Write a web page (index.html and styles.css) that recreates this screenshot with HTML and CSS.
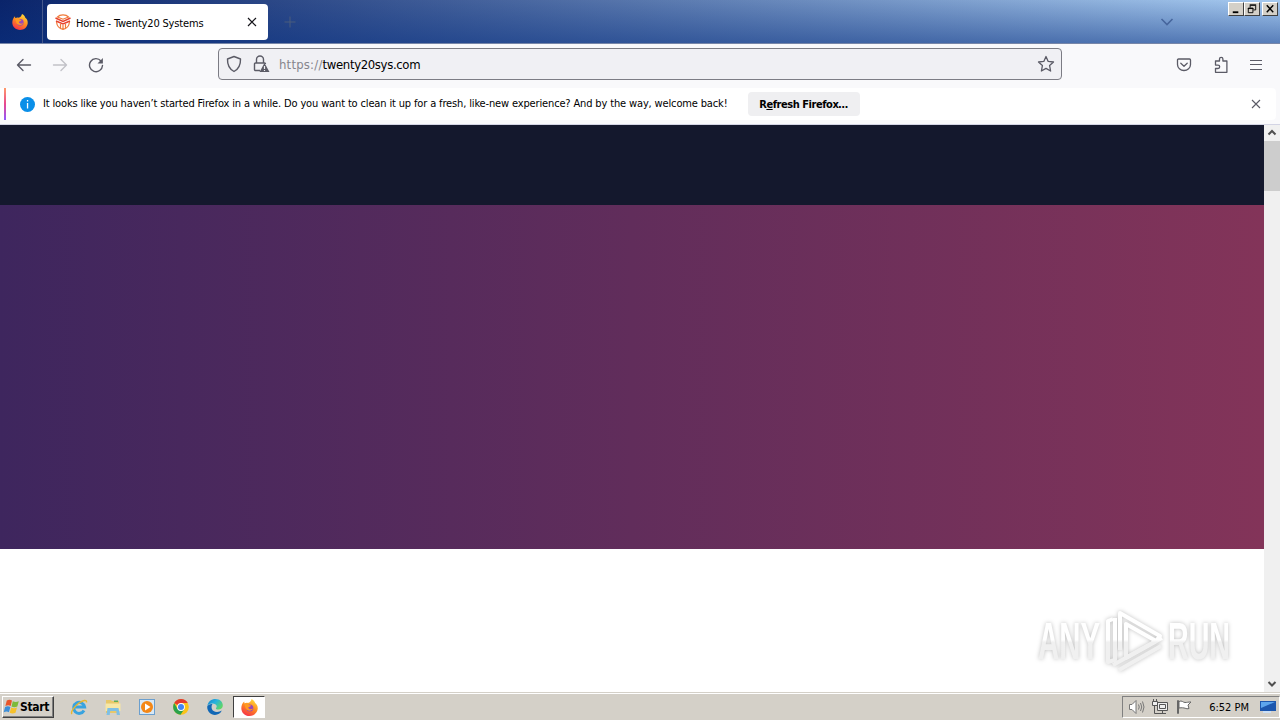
FILE: index.html
```html
<!DOCTYPE html>
<html>
<head>
	<meta charset="utf-8">
	<title>Home - Twenty20 Systems</title>
	<link rel="stylesheet" href="styles.css">
</head>
<body>
	<svg class="defs" width="0" height="0">
		<defs>
			<linearGradient id="flame" x1="0.8" y1="0" x2="0.3" y2="1">
				<stop offset="0" stop-color="#ffe23c"/>
				<stop offset="0.5" stop-color="#ff8a20"/>
				<stop offset="1" stop-color="#f5304a"/>
			</linearGradient>
			<linearGradient id="edge" x1="0" y1="0" x2="1" y2="0.6">
				<stop offset="0" stop-color="#1680c8"/>
				<stop offset="0.5" stop-color="#27b1e0"/>
				<stop offset="1" stop-color="#5fd668"/>
			</linearGradient>
			<linearGradient id="mark" gradientUnits="userSpaceOnUse" x1="0" y1="0" x2="0" y2="66">
				<stop offset="0.48" stop-color="#ffffff"/>
				<stop offset="0.52" stop-color="#f0f0f0"/>
			</linearGradient>
			<symbol id="firefox" viewBox="0 0 16 16">
				<path fill="url(#flame)" d="M10 0c2 1 3 2.500 3.300 3.800C15 5 16 7 15.700 9.500 15.200 13.200 12 16 8 16 3.600 16 .3 12.700.3 8.600.3 6 1.400 3.700 3 2.300l.3 1.900C4.300 3.600 5.500 3.400 6.500 3.700 8.500 3.200 9.500 2 10 0z"/>
				<circle cx="8.300" cy="8.400" r="3.300" fill="#9a48b8"/>
				<path fill="#ff9a22" d="M3 4.500c2-.8 3.600-.2 4.700 1.100L9.500 6c-.5 1.200-2 1.200-2.700 2 .5 2 3 2 4.500 1-.8 2.500-5.600 3-7-.5z"/>
			</symbol>
		</defs>
	</svg>

	<div class="tabs">
		<div class="pinned"><svg width="16" height="16"><use href="#firefox"/></svg></div>
		<div class="tab">
			<svg width="16" height="16" viewBox="0 0 16 16" fill="none" stroke="#e8432e" stroke-width="1.500">
				<path d="M.5 4L8 7.500 15.500 4M1 7l7 3 7-3"/>
				<path stroke="#f07a3a" stroke-width="1.200" d="M2.500 3C5 .2 11 .2 13.500 3L8 5.200zM1.500 8c.5 4 3 6.800 6.500 7.300 3.500-.5 6-3.300 6.500-7.300M5.500 10v4M8 11v4M10.500 10v4"/>
			</svg>
			<span class="title">Home - Twenty20 Systems</span>
			<svg width="10" height="10" viewBox="0 0 10 10" stroke="#15141a" stroke-width="1.200"><path d="M1 1l8 8M9 1L1 9"/></svg>
		</div>
		<svg class="plus" width="12" height="12" viewBox="0 0 12 12" stroke="#4a5c7c"><path d="M6 .5v11M.5 6h11"/></svg>
		<svg class="list" width="14" height="8" viewBox="0 0 14 8" fill="none" stroke="#47669d" stroke-width="1.600"><path d="M1.500 1L7 6.500 12.500 1"/></svg>
		<div class="controls">
			<svg width="15" height="13" viewBox="0 0 15 13"><path fill="#000" d="M4 9h6v2H4z"/></svg>
			<svg width="15" height="13" viewBox="0 0 15 13" fill="none" stroke="#000"><path d="M5.500 5V2.500h6v5H9M5 2h7M3.500 5.500h5v5h-5zM3 6h6"/></svg>
			<svg class="close" width="15" height="13" viewBox="0 0 15 13" stroke="#000" stroke-width="1.600"><path d="M4 2.500l7 7.500M11 2.500L4 10"/></svg>
		</div>
	</div>

	<div class="toolbar">
		<div class="nav">
			<svg width="16" height="16" viewBox="0 0 16 16" fill="none" stroke="#5b5b66" stroke-width="1.400" stroke-linecap="round" stroke-linejoin="round"><path d="M14.500 8H1.500M7 2.500L1.500 8 7 13.500"/></svg>
			<svg width="16" height="16" viewBox="0 0 16 16" fill="none" stroke="#c2c2c8" stroke-width="1.400" stroke-linecap="round" stroke-linejoin="round"><path d="M1.500 8h13M9 2.500L14.500 8 9 13.500"/></svg>
			<svg width="16" height="16" viewBox="0 0 16 16" fill="none" stroke="#5b5b66" stroke-width="1.400" stroke-linecap="round"><path d="M13 4a6.500 6.500 0 1 0 1.500 4.500"/><path fill="#5b5b66" stroke="none" d="M14.900 1v5.500H9.500z"/></svg>
		</div>
		<div class="urlbar">
			<svg width="16" height="18" viewBox="0 0 16 18" fill="none" stroke="#5b5b66" stroke-width="1.400" stroke-linejoin="round"><path d="M8 1.500L14.500 4c.2 5.500-1.800 10-6.500 12.500C3.300 14 1.300 9.500 1.500 4z"/></svg>
			<svg class="lock" width="17" height="18" viewBox="0 0 17 18" fill="none" stroke="#5b5b66" stroke-width="1.400"><path d="M3.500 8V4.500a3.500 3.500 0 0 1 7 0V8M7 15.500H2.500a1 1 0 0 1-1-1V9a1 1 0 0 1 1-1h9a1 1 0 0 1 1 1"/><path fill="#5b5b66" stroke="none" d="M11.500 8l5 9h-10z"/><path stroke="#f0f0f4" stroke-width="1.200" d="M11.500 11v3M11.500 15v1"/></svg>
			<span class="url"><span class="scheme">https://</span>twenty20sys.com</span>
			<svg width="18" height="18" viewBox="0 0 18 18" fill="none" stroke="#5b5b66" stroke-width="1.300" stroke-linejoin="round"><path d="M9 1.500l2.200 4.900 5.300.6-3.900 3.600 1 5.400L9 13.400 4.400 16l1-5.400L1.500 7l5.300-.6z"/></svg>
		</div>
		<div class="actions">
			<svg width="16" height="16" viewBox="0 0 16 16" fill="none" stroke="#5b5b66" stroke-width="1.300" stroke-linecap="round" stroke-linejoin="round"><path d="M2.500 2h11a1 1 0 0 1 1 1V7.500a6.500 6 0 0 1-13 0V3a1 1 0 0 1 1-1zM4.800 6.300L8 9.200l3.200-2.900"/></svg>
			<svg width="16" height="18" viewBox="0 0 16 18" fill="none" stroke="#5b5b66" stroke-width="1.300" stroke-linejoin="round"><path d="M2.500 6.500V5h4V3a1.700 1.700 0 0 1 3.400 0v2h4v11.300H2.500v-3.800H5a1.700 1.700 0 0 0 0-3.400H2.500z"/></svg>
			<svg width="14" height="14" viewBox="0 0 14 14" stroke="#5b5b66" stroke-width="1.200"><path d="M1 2.500h12M1 6.500h12M1 11.500h12"/></svg>
		</div>
	</div>

	<div class="notices">
		<div class="notice">
			<svg width="15" height="15" viewBox="0 0 15 15"><circle cx="7.500" cy="7.500" r="7.500" fill="#0a8fe8"/><path fill="#fff" d="M6.900 3h1.300v1.500H6.900zM6.900 6h1.300v5.500H6.900z"/></svg>
			<span class="message">It looks like you haven’t started Firefox in a while. Do you want to clean it up for a fresh, like-new experience? And by the way, welcome back!</span>
			<button class="refresh">R<u>e</u>fresh Firefox…</button>
			<svg class="dismiss" width="10" height="10" viewBox="0 0 10 10" stroke="#5b5b66" stroke-width="1.100"><path d="M1 1l8 8M9 1L1 9"/></svg>
		</div>
	</div>

	<div class="content">
		<div class="page">
			<div class="site-header"></div>
			<div class="hero"></div>
		</div>
		<div class="scrollbar">
			<svg width="16" height="16" viewBox="0 0 16 16" fill="none" stroke="#505050" stroke-width="2"><path d="M4.500 9.500L8 6l3.500 3.500"/></svg>
			<div class="thumb"></div>
			<svg class="down" width="16" height="16" viewBox="0 0 16 16" fill="none" stroke="#505050" stroke-width="2"><path d="M4.500 6L8 9.500 11.500 6"/></svg>
		</div>
		<svg class="watermark" width="220" height="76" viewBox="0 0 220 76" fill="url(#mark)">
			<text x="4" y="51" textLength="62" lengthAdjust="spacingAndGlyphs">ANY</text>
			<text x="134" y="51" textLength="62" lengthAdjust="spacingAndGlyphs">RUN</text>
			<g fill="none" stroke="url(#mark)" stroke-width="4" stroke-linejoin="round">
				<path d="M79 11l-5 2v41l7-2V10"/>
				<path d="M86 42V5l40 23-4 5-30-17v34l36-20"/>
				<path d="M79 57l43-24M85 62l42-24"/>
			</g>
		</svg>
	</div>

	<div class="taskbar">
		<div class="start">
			<svg width="17" height="16" viewBox="0 0 17 16">
				<path fill="#e8552a" d="M3.800 1.500c2-1.200 3.500-1 5.200 0L7.700 7c-1.500-1-3.300-1-5.300 0z"/>
				<path fill="#7dba3b" d="M9.800 2.200c2 1 3.700 1 6 0l-1.500 5.300c-2 1-4 1-5.800 0z"/>
				<path fill="#3c8ed8" d="M2.100 8c2-1.200 3.700-1 5.300 0l-1.500 5.300c-1.500-1-3.200-1-5.200 0z"/>
				<path fill="#f6c12c" d="M8.200 8.400c2 1 3.700 1 5.800 0l-1.500 5.400c-2 1-4 1-5.800 0z"/>
			</svg>
			<b>Start</b>
		</div>
		<div class="apps">
			<svg width="18" height="18" viewBox="0 0 18 18" fill="none">
				<path stroke="#38a3df" stroke-width="3" d="M14 12.500a5.500 5.500 0 1 1 .6-3.500H5"/>
				<path stroke="#e9b72e" stroke-width="1.400" d="M2 16c-2-2 3-8 7-11 4-2.500 8-4 7.500-.5"/>
			</svg>
			<svg width="18" height="18" viewBox="0 0 18 18">
				<path fill="#e8c86a" d="M2 2h5l1 1h7v12H2z"/><path fill="#f7e7a5" d="M1.500 5.500h15V13h-15z"/><path fill="#5dad58" d="M10 2.500h4V4h-4z"/>
				<path fill="#7fbfe4" d="M3.500 10h11l1.500 7h-3.200l-.5-4H6.200l-.5 4H2.500z"/>
			</svg>
			<svg width="18" height="18" viewBox="0 0 18 18"><path fill="#6b9fce" d="M1 1h16v16H1z"/><path fill="#d8e8f5" d="M2 2h14v14H2z"/><circle cx="9" cy="9" r="6" fill="#f48716"/><path fill="#fff" d="M7 5.500L12.500 9 7 12.500z"/></svg>
			<svg width="18" height="18" viewBox="0 0 18 18">
				<circle cx="9" cy="9" r="7.800" fill="#fbc318"/>
				<path fill="#e33b2e" d="M9 9L2.200 5.100A7.800 7.800 0 0 1 15.800 5.100H9z"/>
				<path fill="#2ba24c" d="M2.200 5.100A7.800 7.800 0 0 0 8.500 16.800L12.400 11 9 9 5.600 11z"/>
				<circle cx="9" cy="9" r="3.900" fill="#fff"/><circle cx="9" cy="9" r="3" fill="#4285f4"/>
			</svg>
			<svg width="18" height="18" viewBox="0 0 18 18">
				<path fill="url(#edge)" d="M1.300 8C2 3.500 5.500 1 9.500 1c4.500 0 7.300 3 7.300 6.300 0 3-2.300 4.200-4.600 4.200-1.700 0-2.300-.5-2.300-1 0-.6 1-1 .8-2.400C10.400 6.500 8.500 5.600 6.500 5.600 4 5.600 2 6.600 1.300 8z"/>
				<path fill="#1167b5" d="M1.200 8.500C2 6.700 4.300 5.700 6.500 6c-2 2.500-1 8 4.500 8 2 0 3.600-.5 4.800-1.400C14.500 15.500 12 17 9 17c-4.500 0-8-3.800-7.800-8.500z"/>
			</svg>
			<div class="active"><svg width="17" height="17"><use href="#firefox"/></svg></div>
		</div>
		<div class="tray">
			<svg width="17" height="16" viewBox="0 0 17 16" fill="none" stroke="#777"><path fill="#fff" d="M1.500 5.500H4l4-4v13l-4-4H1.500z"/><path d="M10.500 5.500q1.500 2.500 0 5M12.500 4q2.500 4 0 8M14.500 2.500q3 5.500 0 11"/></svg>
			<svg width="17" height="16" viewBox="0 0 17 16" fill="none" stroke="#555"><path fill="#eee" d="M5.500 3.500h10v8h-10zM.5 2.500h5v4h-5z"/><path d="M7.500 5.500h6v4h-6zM1.500 0v3M4.500 0v3M2.500 7v7.500H14M10.500 12v2"/></svg>
			<svg width="16" height="16" viewBox="0 0 16 16" fill="#fff" stroke="#666"><path d="M1.500 1.500h1v13h-1zM3 2.500c3-1.500 4 1 6 1s3-.5 6-.5l-3 3 1 3.500c-3 1-4-1.500-10-.5z"/></svg>
			<span class="clock">6:52 PM</span>
			<svg width="16" height="14" viewBox="0 0 16 14"><path fill="#1d57ae" d="M0 1h16v10H0z"/><path fill="#5da5ed" d="M1 2h14L1 8z"/><path fill="#cde0f5" d="M3 11h8v2H3z"/></svg>
		</div>
	</div>
</body>
</html>
```
FILE: styles.css
```css
* {
	box-sizing: border-box;
}
html, body {
	width: 100%;
	height: 100%;
	margin: 0;
	overflow: hidden;
}
body {
	display: flex;
	flex-direction: column;
	font-family: "DejaVu Sans Condensed", "DejaVu Sans", sans-serif;
	font-size: 11px;
	color: #000;
	background: #fff;
}
svg {
	display: block;
	flex: none;
}
.defs {
	position: absolute;
}
.tabs {
	height: 44px;
	flex: none;
	display: flex;
	align-items: center;
	background: linear-gradient(to bottom, rgba(10, 50, 130, 0) 0%, rgba(10, 50, 130, 0.5) 100%), linear-gradient(to right, #0a246a, #a6caf0);
	border-bottom: 1px solid #7786a8;
}
.pinned {
	width: 43px;
	height: 43px;
	padding: 14px 0 0 12px;
	border-right: 1px solid #46598c;
}
.tab {
	width: 221px;
	height: 36px;
	margin-left: 4px;
	padding: 0 11px 0 8px;
	display: flex;
	align-items: center;
	background: #fff;
	border-radius: 4px;
}
.title {
	flex: 1;
	margin-left: 5px;
	padding-top: 3px;
	letter-spacing: -0.17px;
	white-space: nowrap;
}
.plus {
	margin-left: 16px;
}
.list {
	margin-left: auto;
}
.controls {
	display: flex;
	align-self: flex-start;
	margin: 2px 2px 0 54px;
}
.controls svg {
	width: 16px;
	height: 14px;
	background: #d4d0c8;
	border: 1px solid;
	border-color: #fff #404040 #404040 #fff;
}
.controls .close {
	margin-left: 2px;
}
.toolbar {
	height: 44px;
	flex: none;
	display: flex;
	align-items: center;
	padding-bottom: 4px;
	background: #f9f9fb;
}
.nav {
	width: 218px;
	padding: 1px 0 0 16px;
	display: flex;
	gap: 20px;
}
.urlbar {
	width: 844px;
	height: 32px;
	padding: 0 6px 0 7px;
	display: flex;
	align-items: center;
	background: #f0f0f4;
	border: 1px solid #7c7c84;
	border-radius: 4px;
}
.lock {
	margin-left: 11px;
}
.url {
	flex: 1;
	margin-left: 9px;
	padding-top: 1px;
	font-size: 13px;
	letter-spacing: -0.35px;
}
.scheme {
	color: #85858c;
	letter-spacing: 0.2px;
}
.actions {
	flex: 1;
	padding: 1px 17px 0 0;
	display: flex;
	justify-content: flex-end;
	align-items: center;
	gap: 20.5px;
}
.notices {
	height: 37px;
	flex: none;
	padding: 0 4px 4px 0;
	background: #f9f9fb;
	border-bottom: 1px solid #d3d4e4;
}
.notice {
	height: 32px;
	padding: 0 15px 0 20px;
	display: flex;
	align-items: center;
	background: linear-gradient(#ff9a6a, #e8478e 50%, #9059ff) 4px 0 / 2px 100% no-repeat, #fff;
	border-radius: 0 4px 4px 0;
}
.message {
	margin: 0 0 1px 8px;
	letter-spacing: -0.145px;
	white-space: nowrap;
}
.refresh {
	width: 112px;
	height: 24px;
	margin-left: 20px;
	padding: 0;
	border: 0;
	border-radius: 4px;
	background: #efeff1;
	color: #000;
	font: bold 11px "DejaVu Sans Condensed", "DejaVu Sans", sans-serif;
	letter-spacing: -0.45px;
}
.dismiss {
	margin-left: auto;
}
.content {
	flex: 1;
	display: flex;
	position: relative;
	min-height: 0;
}
.page {
	flex: 1;
}
.site-header {
	height: 80px;
	background: #14182d;
}
.hero {
	height: 344px;
	background: linear-gradient(to right, #3e265e, #612d5b 50%, #833459);
}
.scrollbar {
	width: 16px;
	display: flex;
	flex-direction: column;
	background: #f0f0f0;
}
.thumb {
	height: 50px;
	background: #cdcdcd;
}
.down {
	margin-top: auto;
}
.watermark {
	position: absolute;
	right: 26px;
	bottom: 8px;
	overflow: visible;
	font: bold 51px "Liberation Sans", sans-serif;
	filter: drop-shadow(0 0 2px rgba(0, 0, 0, 0.25));
}
.taskbar {
	height: 28px;
	flex: none;
	display: flex;
	align-items: center;
	padding: 1px 0 0 2px;
	background: #d4d0c8;
	border-top: 1px solid #d4d0c8;
	box-shadow: inset 0 1px #fff;
}
.start {
	width: 52px;
	height: 22px;
	display: flex;
	align-items: center;
	border: 1px solid;
	border-color: #fff #404040 #404040 #fff;
	box-shadow: inset -1px -1px #808080;
}
.start b {
	font-size: 12px;
	letter-spacing: -0.3px;
}
.apps {
	display: flex;
	align-items: center;
	gap: 16px;
	margin-left: 16px;
}
.active {
	width: 32px;
	height: 22px;
	margin-left: -7px;
	display: flex;
	align-items: center;
	justify-content: center;
	background: #fff;
	border: 1px solid;
	border-color: #404040 #fff #fff #404040;
}
.tray {
	width: 158px;
	height: 22px;
	margin-left: auto;
	padding: 0 3px 0 5px;
	display: flex;
	align-items: center;
	gap: 7px;
	border: 1px solid;
	border-color: #808080 #fff #fff #808080;
}
.clock {
	flex: 1;
	padding-right: 4px;
	text-align: right;
	white-space: nowrap;
}
```
